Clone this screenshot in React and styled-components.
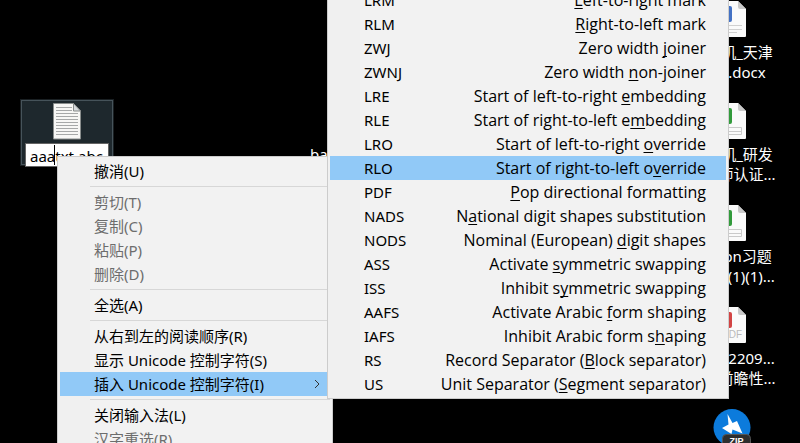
import React from "react";
import styled, { createGlobalStyle } from "styled-components";

const GlobalStyle = createGlobalStyle`
  * { box-sizing: border-box; }
  html, body { margin: 0; background: #000; overflow: hidden; }
  body, button, input {
    font-family: "Noto Sans", "Noto Sans CJK SC", sans-serif;
    font-size: 15px;
    line-height: 20px;
  }
  svg { flex: none; }
`;

const Desktop = styled.main`
  position: relative;
  display: flex;
  justify-content: space-between;
  height: 100vh;
  overflow: hidden;
  padding: 1px 22px 0 20px;
  background: #000;
  color: #fff;
`;

const IconRow = styled.section`
  display: flex;
  align-items: flex-start;
  gap: 196px;
  padding-top: 98px;
`;

const IconColumn = styled.section`
  display: flex;
  flex-direction: column;
  align-items: center;
  gap: 21px;
  width: 92px;
`;

const Shortcut = styled.div`
  display: flex;
  flex: none;
  flex-direction: column;
  align-items: center;
  gap: 4px;
  text-align: center;
  white-space: nowrap;
`;

const PlainLabel = styled.div`
  padding-top: 45px;
`;

const SelectedFile = styled.div`
  display: flex;
  flex-direction: column;
  align-items: center;
  gap: 3px;
  width: 94px;
  height: 67px;
  padding-top: 2px;
  background: #1e282d;
  border: 2px solid #46535a;
  outline: 1px solid #1a2023;
  outline-offset: -1px;
`;

const Rename = styled.div`
  position: relative;
  flex: none;
`;

const RenameInput = styled.input`
  display: block;
  width: 84px;
  height: 24px;
  padding: 1px 3px 0 4px;
  border: 1px solid #646464;
  border-radius: 0;
  outline: none;
  background: #fff;
  color: #000;
`;

const Caret = styled.span`
  position: absolute;
  left: 29px;
  top: 2px;
  width: 1px;
  height: 20px;
  background: #000;
`;

const Menu = styled.div`
  position: absolute;
  left: ${(p) => p.$x}px;
  top: ${(p) => p.$y}px;
  width: ${(p) => p.$w}px;
  padding: 2px;
  border: 1px solid #ccc;
  background: linear-gradient(to right, #f0f0f0 32px, #f2f2f2 32px);
`;

const MenuItem = styled.button`
  display: flex;
  align-items: center;
  justify-content: space-between;
  width: 100%;
  height: 24px;
  margin: 0;
  padding: 0 ${(p) => (p.$sub ? 20 : 8)}px 0 34px;
  border: 0;
  background: ${(p) => (p.$active ? "#91c9f7" : "transparent")};
  color: #000;
  text-align: left;
  white-space: nowrap;
  &:disabled { color: #6d6d6d; }
`;

const Description = styled.span`
  font-family: "Open Sans", sans-serif;
  font-size: 16px;
`;

const Key = styled.u`
  text-decoration-thickness: 1px;
  text-underline-offset: 2px;
  text-decoration-skip-ink: none;
`;

const Separator = styled.hr`
  height: 1px;
  margin: 3px 0 3px 30px;
  border: 0;
  background: #d7d7d7;
`;

const TextFileIcon = () => (
  <svg width="28" height="37" viewBox="0 0 28 37" aria-hidden="true">
    <path d="M.5.5H20.5L27.5 8V36H.5Z" fill="#f7f7f5" stroke="#898d8c" />
    <path d="M20.5.5V8H27.5Z" fill="#d6dadc" stroke="#898d8c" />
    <path d="M3 4.5H19M3 7.5H19M3 10.5H25M3 13.5H25M3 16.5H25M3 19.5H25M3 22.5H25M3 25.5H25M3 28.5H25M3 31.5H25" stroke="#a6a8a8" />
  </svg>
);

const DocumentIcon = ({ color, kind }) => (
  <svg width="28" height="37" viewBox="0 0 28 37" aria-hidden="true">
    <path d="M2 0H20L28 8V35Q28 36 27 36H2Q0 36 0 34V2Q0 0 2 0Z" fill="#fafafa" />
    <path d="M20 0V6Q20 8 22 8H28Z" fill="#c9c9c9" />
    <rect x="-4" y="5" width="18" height="16" rx="2" fill={color} />
    {kind === "doc" && <path d="M2 24.500H24M2 28.500H24M2 31.500H19" stroke="#d0d0d0" />}
    {kind === "sheet" && <path d="M2 24.500H23.500V31.500H2ZM2 28.500H23" fill="none" stroke="#cacaca" />}
    {kind === "pdf" && (
      <text x="4" y="31" fontSize="10" fontFamily="Liberation Sans, sans-serif" fill="#bababa">PDF</text>
    )}
  </svg>
);

const ZipIcon = () => (
  <svg width="38" height="44" viewBox="0 0 38 44" aria-hidden="true">
    <circle cx="19" cy="18.500" r="18.500" fill="#0c7bdc" />
    <path d="M14.500 5L19.500 14L24 12L29.500 24.500L19.500 20.500L18.500 25L9 19L15.500 15.500Z" fill="#fff" />
    <rect x="9.500" y="25.500" width="28" height="17" rx="4" fill="#2e2e2e" stroke="#555" />
    <text x="23.500" y="35" textAnchor="middle" fontSize="9" fontWeight="bold" fontFamily="Liberation Sans, sans-serif" fill="#fff">ZIP</text>
  </svg>
);

const shortcuts = [
  { color: "#4472c4", kind: "doc", lines: ["计算机_天津", "试题.docx"] },
  { color: "#329b3c", kind: "sheet", lines: ["计算机_研发", "工程师认证..."] },
  { color: "#329b3c", kind: "sheet", lines: ["Python习题", "答案1(1)(1)..."] },
  { color: "#d24444", kind: "pdf", lines: ["ME192209...", "技术前瞻性..."] },
];

const editItems = [
  { label: "撤消(U)" },
  null,
  { label: "剪切(T)", disabled: true },
  { label: "复制(C)", disabled: true },
  { label: "粘贴(P)", disabled: true },
  { label: "删除(D)", disabled: true },
  null,
  { label: "全选(A)" },
  null,
  { label: "从右到左的阅读顺序(R)" },
  { label: "显示 Unicode 控制字符(S)" },
  { label: "插入 Unicode 控制字符(I)", submenu: true },
  null,
  { label: "关闭输入法(L)" },
  { label: "汉字重选(R)", disabled: true },
];

/* code, text before the access key, access key, text after it */
const controlCharacters = [
  ["LRM", "", "L", "eft-to-right mark"],
  ["RLM", "", "R", "ight-to-left mark"],
  ["ZWJ", "Zero width ", "j", "oiner"],
  ["ZWNJ", "Zero width ", "n", "on-joiner"],
  ["LRE", "Start of left-to-right ", "e", "mbedding"],
  ["RLE", "Start of right-to-left e", "m", "bedding"],
  ["LRO", "Start of left-to-right ", "o", "verride"],
  ["RLO", "Start of right-to-left o", "v", "erride"],
  ["PDF", "", "P", "op directional formatting"],
  ["NADS", "N", "a", "tional digit shapes substitution"],
  ["NODS", "Nominal (European) ", "d", "igit shapes"],
  ["ASS", "Activate ", "s", "ymmetric swapping"],
  ["ISS", "Inhibit s", "y", "mmetric swapping"],
  ["AAFS", "Activate Arabic ", "f", "orm shaping"],
  ["IAFS", "Inhibit Arabic form s", "h", "aping"],
  ["RS", "Record Separator (", "B", "lock separator)"],
  ["US", "Unit Separator (", "S", "egment separator)"],
];

export default function App() {
  return (
    <Desktop>
      <GlobalStyle />
      <IconRow>
        <SelectedFile>
          <TextFileIcon />
          <Rename>
            <RenameInput aria-label="文件名" defaultValue="aaatxt.abc" />
            <Caret />
          </Rename>
        </SelectedFile>
        <PlainLabel>ba</PlainLabel>
      </IconRow>
      <IconColumn>
        {shortcuts.map((s) => (
          <Shortcut key={s.lines[1]}>
            <DocumentIcon color={s.color} kind={s.kind} />
            <div>
              {s.lines.map((line) => <div key={line}>{line}</div>)}
            </div>
          </Shortcut>
        ))}
        <Shortcut><ZipIcon /></Shortcut>
      </IconColumn>

      <Menu role="menu" $x={57} $y={156} $w={276}>
        {editItems.map((item, i) =>
          item ? (
            <MenuItem key={i} role="menuitem" disabled={item.disabled} $active={item.submenu}>
              <span>{item.label}</span>
              {item.submenu && (
                <svg width="8" height="12" viewBox="0 0 8 12" aria-hidden="true">
                  <path d="M1 2L5 6L1 10" fill="none" stroke="#333" />
                </svg>
              )}
            </MenuItem>
          ) : (
            <Separator key={i} />
          )
        )}
      </Menu>

      <Menu role="menu" $x={327} $y={-15} $w={402}>
        {controlCharacters.map(([code, before, key, after]) => (
          <MenuItem key={code} role="menuitem" $sub $active={code === "RLO"}>
            <span>{code}</span>
            <Description>{before}<Key>{key}</Key>{after}</Description>
          </MenuItem>
        ))}
      </Menu>
    </Desktop>
  );
}
